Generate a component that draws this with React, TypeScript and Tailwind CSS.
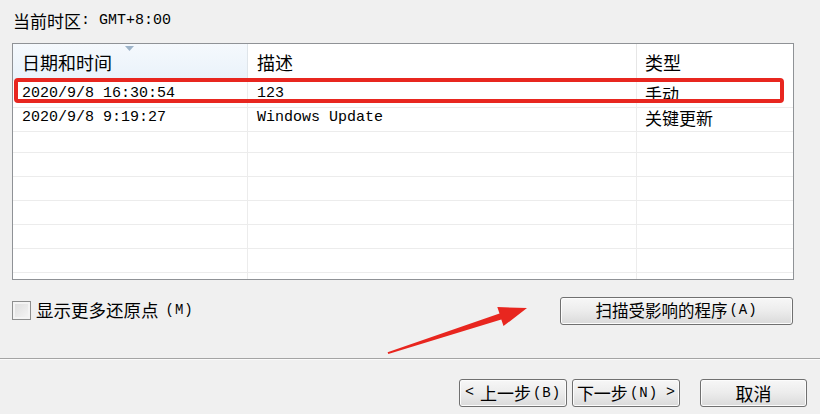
import React from "react";

const cjk = "font-['Noto_Sans_CJK_SC','Liberation_Sans',sans-serif]";
const mono = "font-['Liberation_Mono','Noto_Sans_CJK_SC',monospace]";

const rows: [string, string, string][] = [
  ["2020/9/8 16:30:54", "123", "手动"],
  ["2020/9/8 9:19:27", "Windows Update", "关键更新"],
  ["", "", ""],
  ["", "", ""],
  ["", "", ""],
  ["", "", ""],
  ["", "", ""],
  ["", "", ""],
  ["", "", ""],
];

function Key({ k }: { k: string }) {
  return <span className={`${mono} text-[14px] tracking-[1px] ml-[2px]`}>({k})</span>;
}

function WinButton({ className, children }: { className: string; children: React.ReactNode }) {
  return (
    <button className={`h-[28px] flex items-center justify-center border border-[#707070] rounded-[3px] bg-linear-to-b from-[#f7f7f7] via-[#ececec] to-[#dadada] text-black shadow-[inset_0_0_0_1px_#fcfcfc] ${className}`}>
      {children}
    </button>
  );
}

export default function App() {
  return (
    <div className="relative w-[820px] h-[414px] bg-[#f0f0f0] overflow-hidden text-black">
      <div className="pt-[11px] pl-[13px] h-[30px] flex items-center">
        <span className={`${cjk} text-[17px] leading-[19px]`}>当前时区</span>
        <span className={`${mono} text-[15px] leading-[19px]`}>: GMT+8:00</span>
      </div>

      {/* restore points list */}
      <div className="relative ml-[12px] mt-[13px] w-[782px] h-[237px] border border-[#8f9296] bg-white overflow-hidden">
        <div className="grid grid-cols-[235px_389px_1fr] h-[37px]">
          <div className="relative flex items-center pl-[9px] bg-linear-to-b from-[#f5f9fd] to-[#e9f2fa] border-r border-[#dfe5ea]">
            <svg className="absolute left-[112px] top-[2px]" width="9" height="5" viewBox="0 0 9 5">
              <path d="M0 0 L9 0 L4.5 5 Z" fill="#9db3c8" />
            </svg>
            <span className={`${cjk} text-[18px]`}>日期和时间</span>
          </div>
          <div className="flex items-center pl-[9px] border-r border-[#e6e6e6]">
            <span className={`${cjk} text-[18px]`}>描述</span>
          </div>
          <div className="flex items-center pl-[8px]">
            <span className={`${cjk} text-[18px]`}>类型</span>
          </div>
        </div>
        {rows.map((r, i) => (
          <div key={i} className="grid grid-cols-[235px_389px_1fr] h-[24px]">
            <div className="flex items-center pl-[9px] border-r border-b border-[#ececec]">
              <span className={`${mono} text-[15px]`}>{r[0]}</span>
            </div>
            <div className="flex items-center pl-[9px] border-r border-b border-[#ececec]">
              <span className={`${mono} text-[15px]`}>{r[1]}</span>
            </div>
            <div className="flex items-center pl-[8px] border-b border-[#ececec]">
              <span className={`${cjk} text-[17px]`}>{r[2]}</span>
            </div>
          </div>
        ))}
        <div className="absolute left-[1px] top-[34px] w-[770px] h-[25px] border-[4px] border-[#e8261f] rounded-[4px]" />
      </div>

      <div className="mt-[17px] h-[27px] pl-[12px] pr-[27px] flex items-center justify-between">
        <label className="flex items-center gap-[5px]">
          <span className="w-[19px] h-[19px] border border-[#8e8f8f] bg-linear-to-br from-[#dcdcdc] to-[#f6f6f6] shadow-[inset_0_0_0_2px_#f4f4f4]" />
          <span className={`${cjk} text-[17.5px]`}>显示更多还原点</span>
          <Key k="M" />
        </label>
        <WinButton className="w-[233px] h-[27px]">
          <span className={`${cjk} text-[16.5px]`}>扫描受影响的程序</span>
          <Key k="A" />
        </WinButton>
      </div>

      <div className="mt-[34px] h-px bg-[#a4a4a4]" />
      <div className="h-px bg-[#fbfbfb]" />

      <div className="mt-[19px] pr-[13px] flex justify-end">
        <WinButton className="w-[108px]">
          <span className={`${mono} text-[15px] mr-[6px]`}>&lt;</span>
          <span className={`${cjk} text-[17px]`}>上一步</span>
          <Key k="B" />
        </WinButton>
        <WinButton className="w-[108px] ml-[5px]">
          <span className={`${cjk} text-[17px]`}>下一步</span>
          <Key k="N" />
          <span className={`${mono} text-[15px] ml-[8px]`}>&gt;</span>
        </WinButton>
        <WinButton className="w-[107px] ml-[20px]">
          <span className={`${cjk} text-[18px]`}>取消</span>
        </WinButton>
      </div>

      {/* annotation arrow */}
      <svg className="absolute left-0 top-0 pointer-events-none" width="820" height="414" viewBox="0 0 820 414">
        <polygon
          points="387.6,352.2 499.5,313.6 497.3,307.1 527,308 503.5,326.1 501.3,319.6 388.3,353.9"
          fill="#e8261f"
        />
      </svg>
    </div>
  );
}
